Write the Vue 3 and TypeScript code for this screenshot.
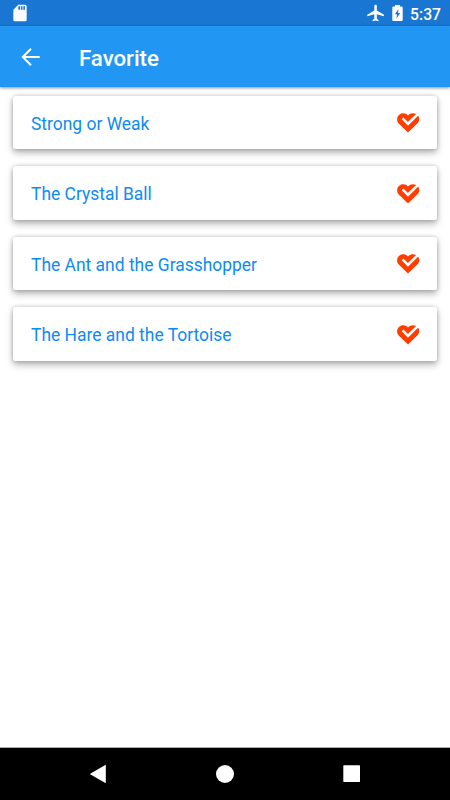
<script setup lang="ts">
const stories: string[] = [
  'Strong or Weak',
  'The Crystal Ball',
  'The Ant and the Grasshopper',
  'The Hare and the Tortoise',
]
</script>

<template>
  <div class="screen">
    <header class="status-bar">
      <svg class="icon sd" viewBox="0 0 24 24">
        <path d="M18 2h-8L4.02 8 4 20c0 1.1.9 2 2 2h12c1.1 0 2-.9 2-2V4c0-1.1-.9-2-2-2zm-6 6h-2V4h2v4zm3 0h-2V4h2v4zm3 0h-2V4h2v4z" />
      </svg>
      <div class="status-right">
        <svg class="icon plane" viewBox="0 0 24 24">
          <path d="M21.5 16v-2l-8.5-5V3.5c0-.83-.67-1.5-1.5-1.5S10 2.67 10 3.5V9l-8.5 5v2l8.500-2.500V19l-2 1.500V22l3.500-1 3.500 1v-1.500L13 19v-5.500z" />
        </svg>
        <svg class="battery" viewBox="0 0 11 16">
          <path fill-rule="evenodd" d="M1 1.500H3V0H8V1.500H10L10.700 2.200V15.300L10 16H1L.3 15.300V2.200zM6.500 4L2.900 9.200H5L4.500 13.500 8.200 8H6z" />
        </svg>
        <span class="clock">5:37</span>
      </div>
    </header>

    <div class="app-bar">
      <svg class="back" viewBox="0 0 20 20">
        <path d="M18.700 10H2M10 1.800L1.800 10l8.200 8.200" />
      </svg>
      <h1 class="title">Favorite</h1>
    </div>

    <main class="list">
      <article v-for="story in stories" :key="story" class="card">
        <span class="name">{{ story }}</span>
        <svg class="heart" viewBox="0 0 24 21">
          <path class="heart-fill" d="M12 20.500L3 11.700C-.2 8.400.8 3.200 4.800 1.700 7.500.7 10.300 1.500 12 3.500 14 1.200 17 .6 19.700 1.800 24 3.700 24.400 8.700 21 11.800z" />
          <path class="heart-check" d="M6.600 6.400L12 11.800 22.600 1.400" />
        </svg>
      </article>
    </main>

    <nav class="nav-bar">
      <svg class="nav-icon" viewBox="0 0 20 20"><path d="M2 10L3 9.200 17.800 .8V19.200L3 10.800z" /></svg>
      <svg class="nav-icon" viewBox="0 0 20 20"><circle cx="10" cy="10" r="9" /></svg>
      <svg class="nav-icon" viewBox="0 0 20 20"><rect x="1.300" y="1.300" width="16.700" height="16.600" rx=".6" /></svg>
    </nav>
  </div>
</template>

<style>
body {
  margin: 0;
  background: #fff;
}
</style>

<style scoped>
.screen {
  display: flex;
  flex-direction: column;
  width: 450px;
  height: 800px;
  overflow: hidden;
  background: #fff;
  font-family: Roboto, sans-serif;
}

.status-bar {
  display: flex;
  flex: none;
  align-items: center;
  justify-content: space-between;
  box-sizing: border-box;
  height: 26px;
  padding: 0 9px 0 10px;
  background: #1976d2;
  color: #fff;
}

.status-right {
  display: flex;
  align-items: center;
}

.icon {
  display: block;
  width: 20px;
  height: 20px;
  fill: #fff;
}

.plane {
  margin-right: 6px;
}

.battery {
  width: 11px;
  height: 16px;
  margin-right: 7px;
  fill: #fff;
}

.clock {
  padding-top: 3px;
  font-size: 15.700px;
  line-height: 20px;
  font-weight: 500;
}

.app-bar {
  position: relative;
  display: flex;
  flex: none;
  align-items: center;
  box-sizing: border-box;
  height: 61px;
  padding-left: 21px;
  background: #2196f3;
  box-shadow: 0 1px 3px rgba(0, 0, 0, 0.45);
  color: #fff;
}

.back {
  width: 20px;
  height: 20px;
  fill: none;
  stroke: #fff;
  stroke-width: 2;
}

.title {
  margin: 2px 0 0 38px;
  font-size: 22.200px;
  line-height: 28px;
  font-weight: 500;
}

.list {
  display: flex;
  flex: 1;
  flex-direction: column;
  gap: 17px;
  padding: 9px 13px 0;
}

.card {
  display: flex;
  align-items: center;
  justify-content: space-between;
  box-sizing: border-box;
  height: 53.400px;
  padding: 2.500px 17px 0 18px;
  border-radius: 2.500px;
  background: #fff;
  box-shadow: 0 4px 7px rgba(0, 0, 0, 0.28), 0 0 4px rgba(0, 0, 0, 0.22);
}

.name {
  color: #0d8bf2;
  font-size: 17.450px;
  line-height: 24px;
}

.heart {
  width: 24px;
  height: 21px;
  margin-top: -2px;
}

.heart-fill {
  fill: #ff3d00;
}

.heart-check {
  fill: none;
  stroke: #fff;
  stroke-width: 2.600;
}

.nav-bar {
  display: flex;
  flex: none;
  align-items: center;
  justify-content: space-between;
  box-sizing: border-box;
  height: 53px;
  padding: 0 88px;
  border-top: 1px solid #aaa;
  background: #000;
}

.nav-icon {
  width: 20px;
  height: 20px;
  fill: #fff;
}
</style>
